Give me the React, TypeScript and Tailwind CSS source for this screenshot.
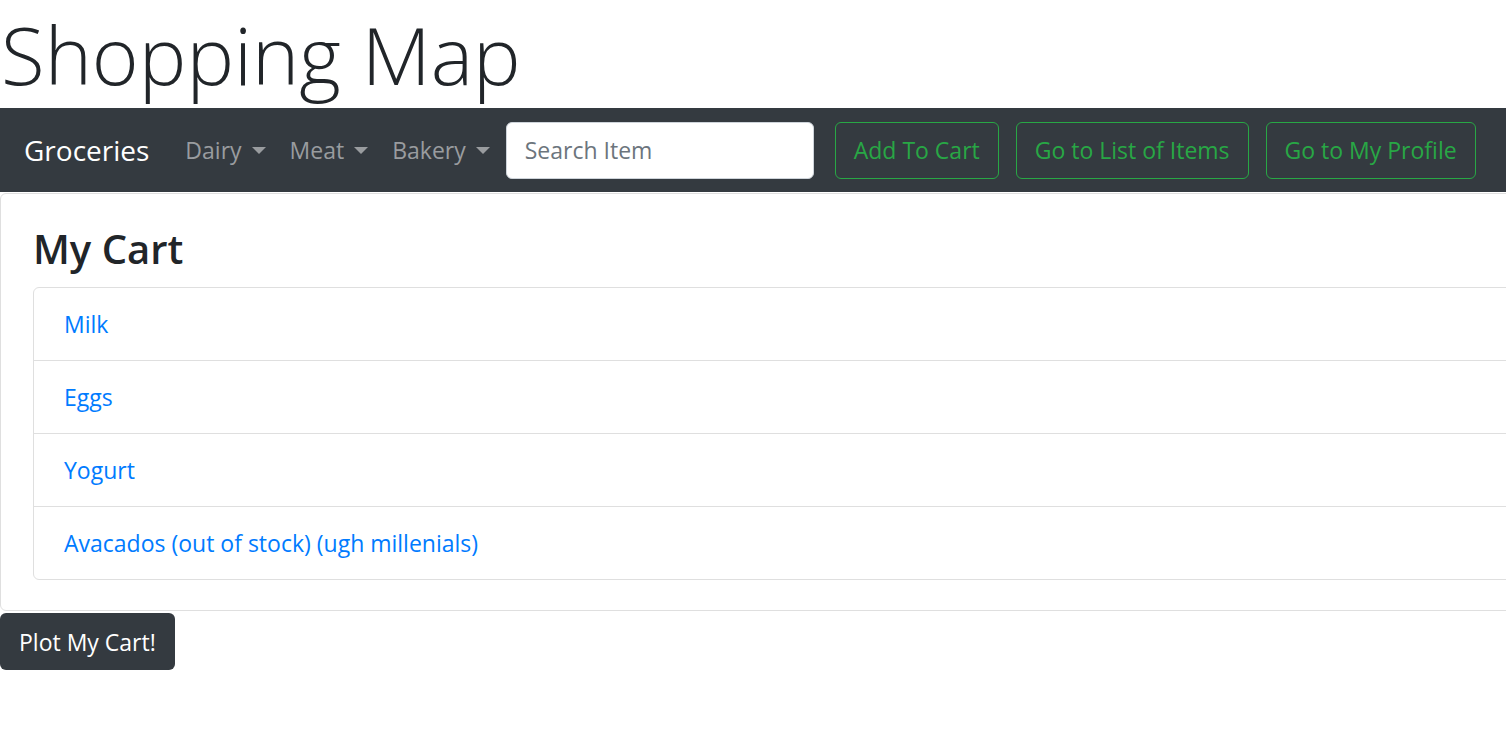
import * as React from "react";

const font = { fontFamily: '"Open Sans", "Noto Sans", Arial, sans-serif' };

const Caret: React.FC = () => (
  <span className="ml-[10px] inline-block align-middle border-t-[7px] border-x-[7px] border-t-current border-x-transparent border-b-0" />
);

const NavDrop: React.FC<{ label: string }> = ({ label }) => (
  <a className="flex items-center px-3 text-[23px] leading-[36px] text-[#999c9f] cursor-pointer">
    <span>{label}</span>
    <Caret />
  </a>
);

const NavButton: React.FC<{ label: string; className?: string }> = ({ label, className = "" }) => (
  <button
    className={`h-[57px] px-[18px] rounded-[6px] border-[1.5px] border-[#28a745] text-[#28a745] text-[23px] leading-[36px] whitespace-nowrap ${className}`}
  >
    {label}
  </button>
);

const items = ["Milk", "Eggs", "Yogurt", "Avacados (out of stock) (ugh millenials)"];

export default function App() {
  return (
    <div className="min-h-screen bg-white overflow-hidden text-[#212529]" style={font}>
      <h1 className="pl-px text-[80px] font-light leading-[108px] whitespace-nowrap">Shopping Map</h1>

      {/* navbar */}
      <nav className="flex items-center h-[84px] px-6 bg-[#343a40] w-[1560px]">
        <span className="mr-6 text-[28px] leading-[45px] text-white">Groceries</span>
        <NavDrop label="Dairy" />
        <NavDrop label="Meat" />
        <NavDrop label="Bakery" />
        <input
          className="ml-[4px] w-[308px] h-[57px] px-[18px] rounded-[6px] border border-[#ced4da] bg-white text-[23px] text-[#495057] placeholder:text-[#6c757d] outline-none"
          placeholder="Search Item"
        />
        <NavButton label="Add To Cart" className="ml-[21px]" />
        <NavButton label="Go to List of Items" className="ml-[17px]" />
        <NavButton label="Go to My Profile" className="ml-[17px]" />
      </nav>

      {/* cart card */}
      <section className="mt-px w-[1560px] border border-[#dfdfdf] rounded-[6px] pt-[30px] pb-[30px] pl-[32px] pr-[30px]">
        <h3 className="text-[40px] font-semibold leading-[50px] mb-[13px]">My Cart</h3>
        <ul className="border border-[#dfdfdf] rounded-[6px] divide-y divide-[#dfdfdf]">
          {items.map((item) => (
            <li key={item} className="px-[30px] py-[18px] text-[23px] leading-[36px]">
              <a className="text-[#007bff] cursor-pointer">{item}</a>
            </li>
          ))}
        </ul>
      </section>

      <button className="mt-[2px] h-[57px] px-[19px] rounded-[6px] bg-[#343a40] text-white text-[23px] leading-[36px]">
        Plot My Cart!
      </button>
    </div>
  );
}
